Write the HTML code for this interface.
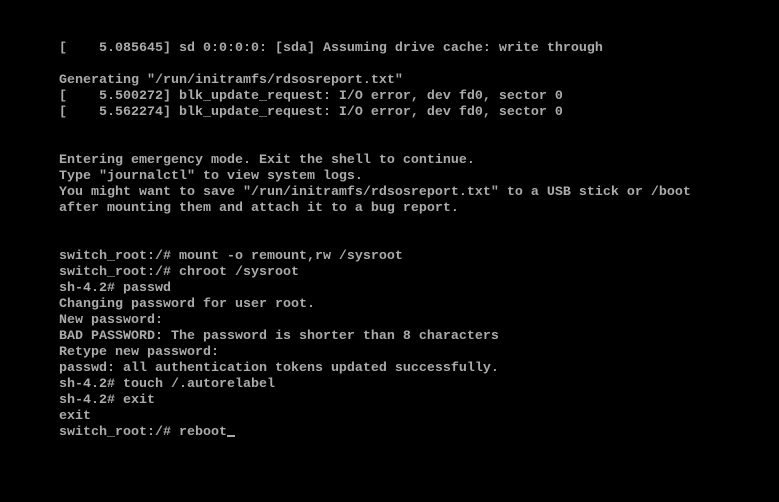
<!DOCTYPE html>
<html><head><style>
html,body{margin:0;padding:0;background:#000;width:779px;height:502px;overflow:hidden}
pre{position:absolute;left:59px;top:41px;margin:0;font-family:"Liberation Mono","DejaVu Sans Mono",monospace;font-size:13.33px;line-height:16px;color:#ababab;font-weight:bold;letter-spacing:0}
.c{display:inline-block;width:8px;height:2px;background:#ababab;vertical-align:-2px}
</style></head><body>
<pre>[    5.085645] sd 0:0:0:0: [sda] Assuming drive cache: write through

Generating "/run/initramfs/rdsosreport.txt"
[    5.500272] blk_update_request: I/O error, dev fd0, sector 0
[    5.562274] blk_update_request: I/O error, dev fd0, sector 0


Entering emergency mode. Exit the shell to continue.
Type "journalctl" to view system logs.
You might want to save "/run/initramfs/rdsosreport.txt" to a USB stick or /boot
after mounting them and attach it to a bug report.


switch_root:/# mount -o remount,rw /sysroot
switch_root:/# chroot /sysroot
sh-4.2# passwd
Changing password for user root.
New password:
BAD PASSWORD: The password is shorter than 8 characters
Retype new password:
passwd: all authentication tokens updated successfully.
sh-4.2# touch /.autorelabel
sh-4.2# exit
exit
switch_root:/# reboot<span class="c"></span></pre>
</body></html>
